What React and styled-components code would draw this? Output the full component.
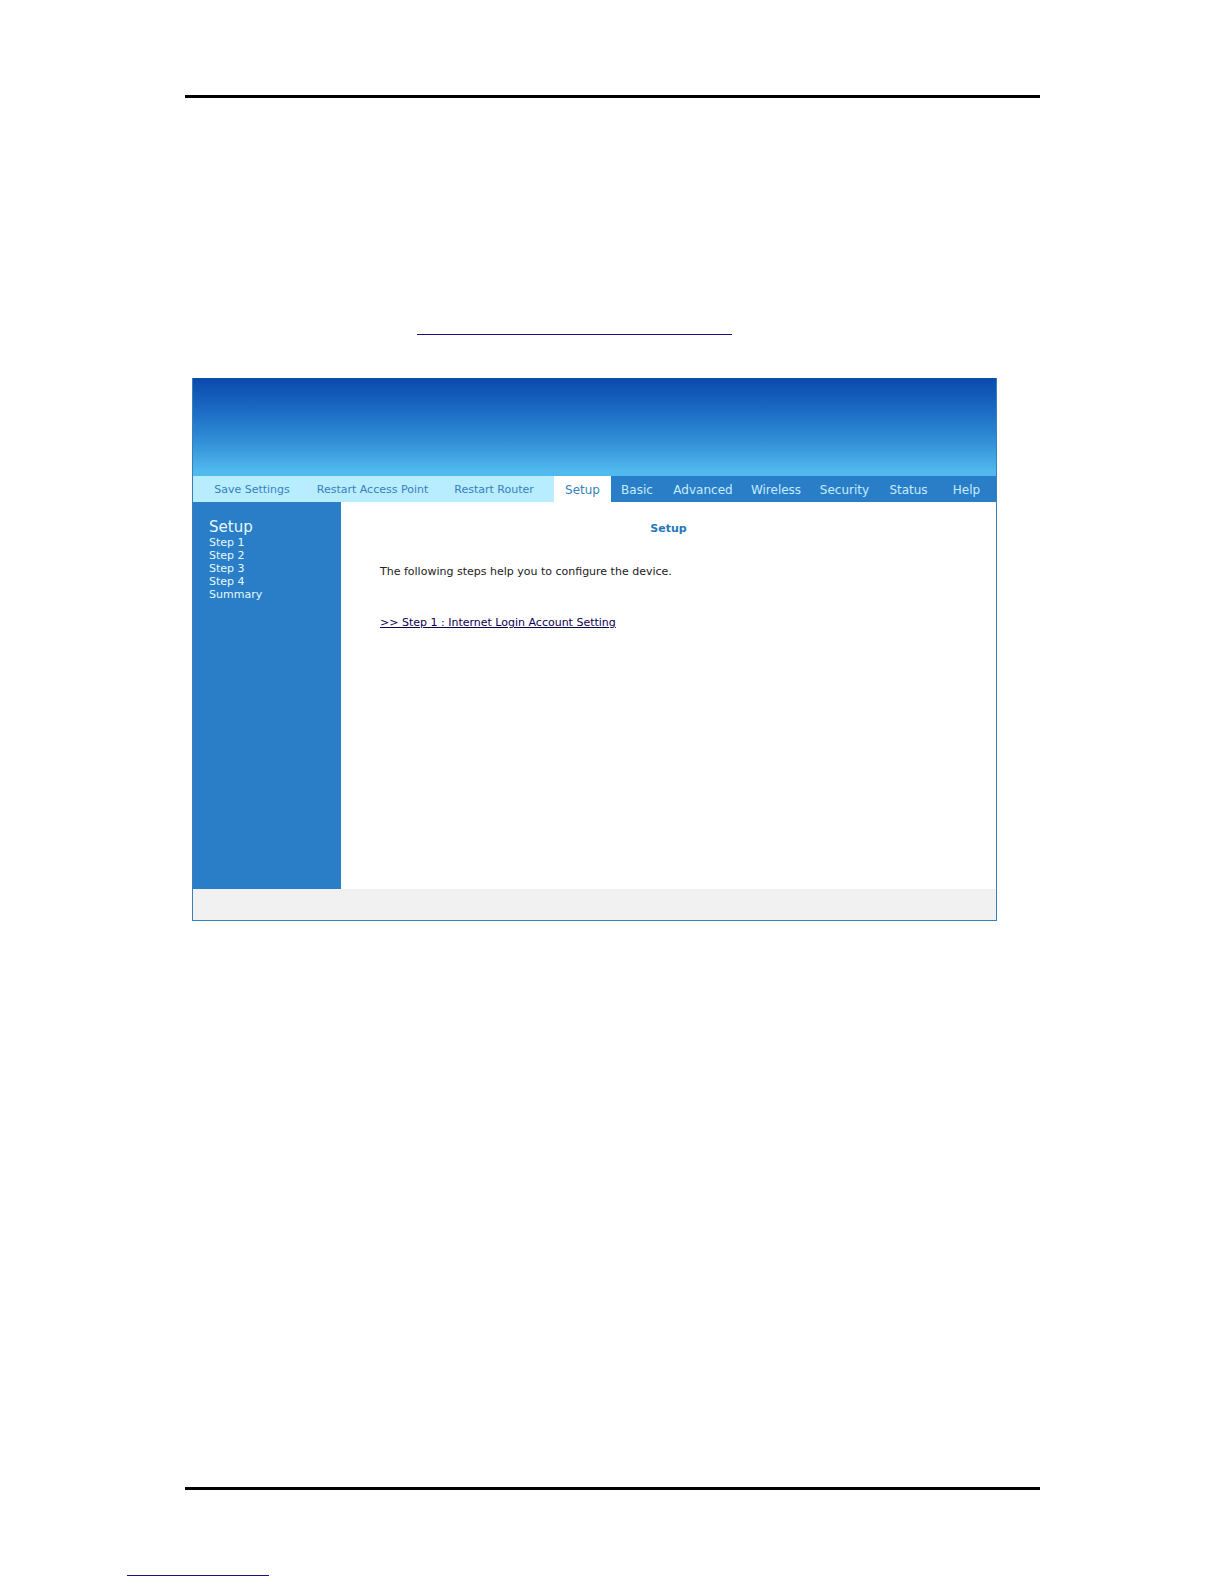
import React from "react";
import styled, { createGlobalStyle } from "styled-components";

const GlobalStyle = createGlobalStyle`
  * {
    box-sizing: border-box;
  }
  body {
    margin: 0;
    background: #fff;
    font-family: Verdana, "DejaVu Sans", sans-serif;
    font-size: 11px;
    line-height: 13px;
    color: #222;
  }
`;

const Page = styled.div`
  padding-top: 95px;
  padding-bottom: 8px;
`;

const Sheet = styled.div`
  margin: 0 184px 0 185px;
`;

const Rule = styled.hr`
  height: 3px;
  margin: 0;
  border: 0;
  background: #000;
`;

const BlankLink = styled.a`
  display: block;
  width: ${props => props.$width};
  height: 16px;
  margin-left: ${props => props.$indent};
  border-bottom: 1px solid #1a1280;
`;

const LinkRow = styled.div`
  padding: 221px 0 43px;
`;

const Panel = styled.section`
  display: flex;
  flex-direction: column;
  margin: 0 43px 566px 7px;
  border: 1px solid #3a7fb9;
  border-top: 0;
`;

const Banner = styled.header`
  height: 98px;
  background: linear-gradient(#0a4aac, #1c6cc4 34%, #3291d8 66%, #50b9ee 95%);
`;

const TopBar = styled.div`
  display: grid;
  grid-template-columns: 361fr 442fr;
  height: 26px;
`;

const Actions = styled.div`
  display: grid;
  grid-template-columns: 118fr 123fr 120fr;
  background: #b8edff;
`;

const ActionButton = styled.button`
  padding: 0;
  border: 0;
  background: none;
  font: inherit;
  color: #367fbd;
  white-space: nowrap;
`;

const Tabs = styled.nav`
  display: grid;
  grid-template-columns: 57fr 52fr 80fr 66fr 71fr 57fr 59fr;
  background: #2a7dc7;
`;

const Tab = styled.a`
  display: flex;
  align-items: center;
  justify-content: center;
  padding-top: 2px;
  font-size: 12px;
  text-decoration: none;
  color: ${props => (props.$active ? "#367fbd" : "#c4edff")};
  background: ${props => (props.$active ? "#fff" : "none")};
`;

const Main = styled.div`
  display: grid;
  grid-template-columns: 148px 1fr;
  min-height: 387px;
`;

const Sidebar = styled.aside`
  display: flex;
  flex-direction: column;
  align-items: flex-start;
  padding: 16px;
  background: #2a7dc7;
`;

const SideLink = styled.a`
  font-size: ${props => (props.$heading ? "15px" : "11px")};
  line-height: ${props => (props.$heading ? "18px" : "13px")};
  text-decoration: none;
  color: #e4fbff;
`;

const Content = styled.main`
  padding: 20px 39px;
`;

const Title = styled.h1`
  margin: 0 0 30px;
  font-size: 11px;
  line-height: 13px;
  text-align: center;
  color: #2478b8;
`;

const Text = styled.p`
  margin: 0 0 38px;
`;

const StepLink = styled.a`
  color: #0c0050;
`;

const Footer = styled.footer`
  height: 31px;
  background: #f1f1f1;
`;

const BottomLink = styled.div`
  padding-top: 70px;
`;

const actions = ["Save Settings", "Restart Access Point", "Restart Router"];
const tabs = [
  "Setup",
  "Basic",
  "Advanced",
  "Wireless",
  "Security",
  "Status",
  "Help"
];
const steps = ["Step 1", "Step 2", "Step 3", "Step 4", "Summary"];

const RouterPanel = () => (
  <Panel>
    <Banner />
    <TopBar>
      <Actions>
        {actions.map(name => (
          <ActionButton key={name} type="button">
            {name}
          </ActionButton>
        ))}
      </Actions>
      <Tabs>
        {tabs.map(name => (
          <Tab key={name} href="#" $active={name === "Setup"}>
            {name}
          </Tab>
        ))}
      </Tabs>
    </TopBar>
    <Main>
      <Sidebar>
        <SideLink href="#" $heading>
          Setup
        </SideLink>
        {steps.map(name => (
          <SideLink key={name} href="#">
            {name}
          </SideLink>
        ))}
      </Sidebar>
      <Content>
        <Title>Setup</Title>
        <Text>The following steps help you to configure the device.</Text>
        <StepLink href="#">
          &gt;&gt; Step 1 : Internet Login Account Setting
        </StepLink>
      </Content>
    </Main>
    <Footer />
  </Panel>
);

const App = () => (
  <Page>
    <GlobalStyle />
    <Sheet>
      <Rule />
      <LinkRow>
        <BlankLink href="#" aria-label="Device address" $width="315px" $indent="232px" />
      </LinkRow>
      <RouterPanel />
      <Rule />
    </Sheet>
    <BottomLink>
      <BlankLink href="#" aria-label="Manual website" $width="142px" $indent="127px" />
    </BottomLink>
  </Page>
);

export default App;
